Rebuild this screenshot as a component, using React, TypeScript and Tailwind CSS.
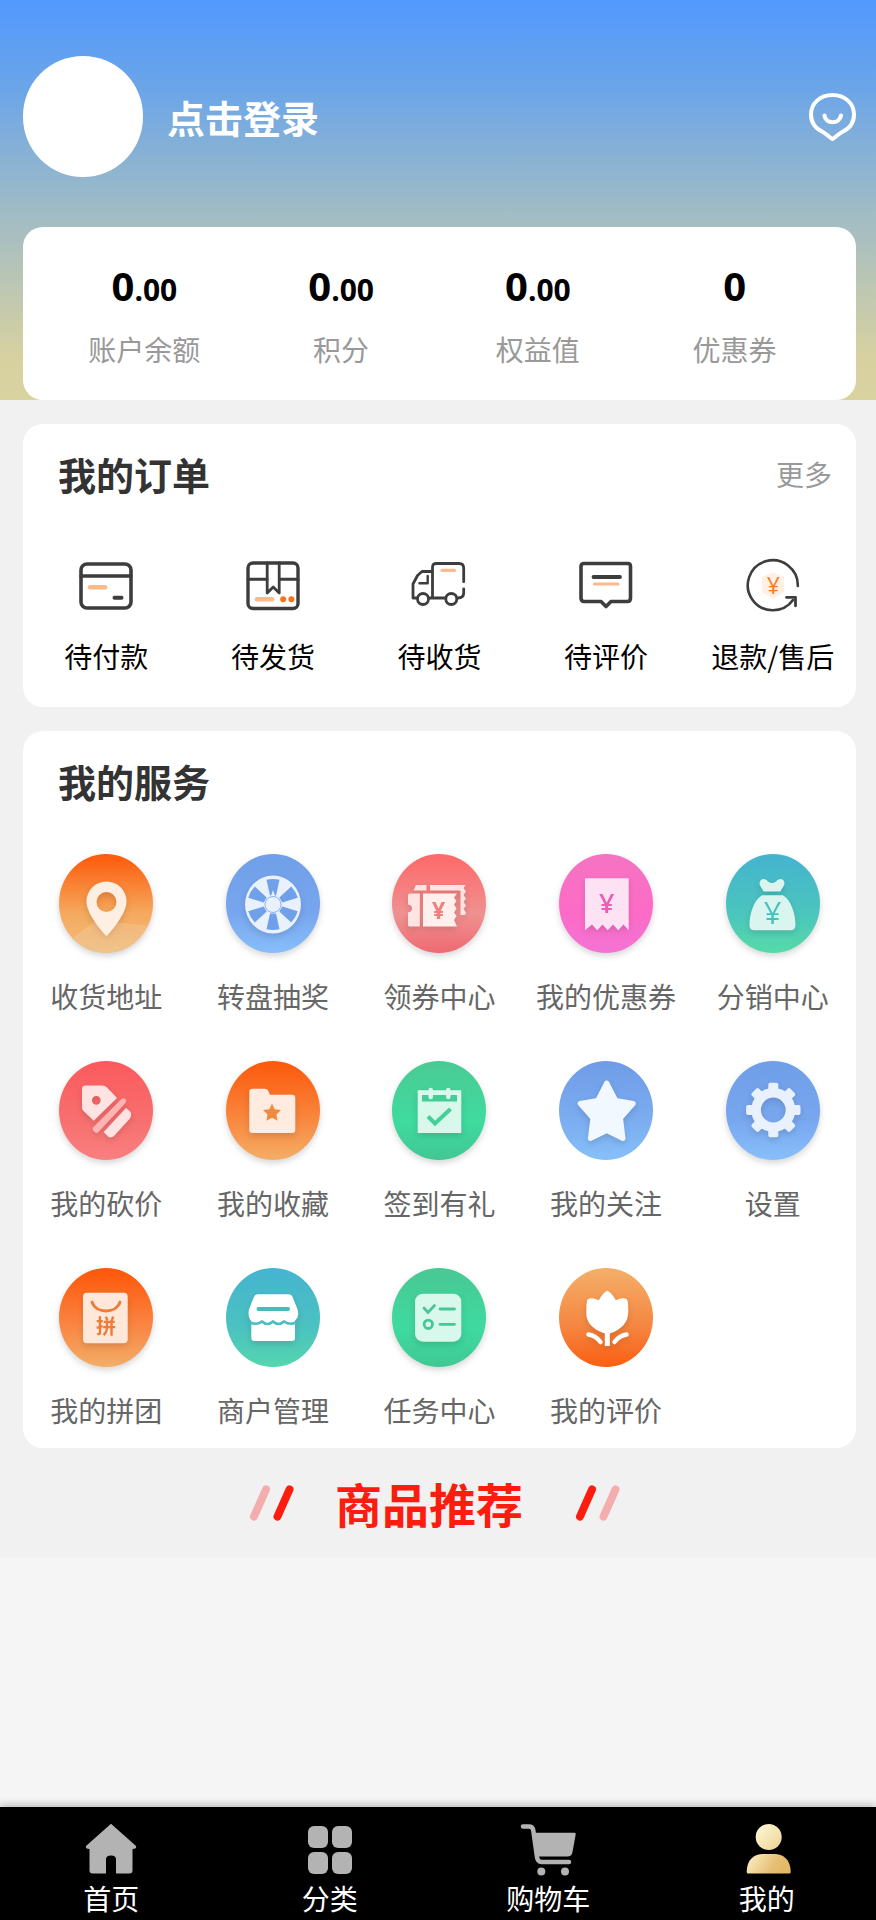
import type { ReactNode } from 'react';

const stats = [
  { label: '账户余额', whole: '0', cents: '.00' },
  { label: '积分', whole: '0', cents: '.00' },
  { label: '权益值', whole: '0', cents: '.00' },
  { label: '优惠券', whole: '0', cents: '' },
];

const orders = [
  {
    label: '待付款',
    icon: (
      <>
        <rect x="3" y="6" width="50" height="44" rx="6" strokeWidth="3.6" />
        <path d="M3 18h50" strokeWidth="3.4" />
        <path d="M12 29.3h15" stroke="#fbb98c" strokeWidth="4.4" />
        <path d="M36.5 39.7h7" strokeWidth="4" />
      </>
    ),
  },
  {
    label: '待发货',
    icon: (
      <>
        <rect x="3" y="5" width="50" height="45.5" rx="5" strokeWidth="3.4" />
        <path d="M3 21.3h19M34.5 21.3H53" strokeWidth="3" />
        <path d="M22.2 5v30l6-6 6 6V5" strokeWidth="2.8" />
        <path d="M12 41.3h15" stroke="#fbb98c" strokeWidth="4.6" />
        <circle cx="38.2" cy="41.2" r="3" fill="#f97316" stroke="none" />
        <circle cx="46.4" cy="41.2" r="3" fill="#f97316" stroke="none" />
      </>
    ),
  },
  {
    label: '待收货',
    icon: (
      <>
        <path d="M5.5 40H2V26l4.5-8.5 4.5-4h10.500M18.500 40H34M21.500 39V9.500q0-4 4-4H48q4.700 0 4.700 4.700v13.500M52.700 31v4q0 5-6 5" strokeWidth="2.800" />
        <path d="M16.700 18v7.300H8.500" strokeWidth="2.400" />
        <circle cx="12" cy="41" r="5.500" strokeWidth="2.800" />
        <circle cx="40.300" cy="41" r="5.500" strokeWidth="2.800" />
        <path d="M31 12.300h12.500" stroke="#fbb98c" strokeWidth="3.200" />
      </>
    ),
  },
  {
    label: '待评价',
    icon: (
      <>
        <path d="M6 5.500h44q2.500 0 2.500 3V40q0 3.500-3 3.500H33L28 48.500l-5-5H6q-3 0-3-3.500V8.500q0-3 3-3z" strokeWidth="3.600" />
        <path d="M15.500 19h26.500" strokeWidth="3.800" />
        <path d="M16.500 26h23.500" stroke="#fbb98c" strokeWidth="3.200" />
      </>
    ),
  },
  {
    label: '退款/售后',
    icon: (
      <>
        <path d="M28 14.500l11 4.500v15l-11 7-11-7V19z" fill="#fff0e5" stroke="none" />
        <path d="M52.800 28A25 25 0 1 0 48 42" strokeWidth="2.600" />
        <path d="M41.500 39.300h9v8.500" strokeWidth="2.800" />
        <text x="28.300" y="36" textAnchor="middle" fontSize="23" fontWeight="500" fill="#f97a26" stroke="none" fontFamily="Open Sans, sans-serif">¥</text>
      </>
    ),
  },
];

type Service = {
  label: string;
  id: string;
  colors: string[];
  flat?: boolean;
  icon: ReactNode;
};

const services: Service[] = [
  {
    label: '收货地址',
    id: 'address',
    colors: ['#fd5f10', '#f4a95e', '#f3bd7c'],
    icon: (
      <>
        <path d="M14.500 84Q25 74 38 67l51 4.500Q85 82 72 91 47 106 22 91z" fill="#fff" opacity=".14" />
        <path d="M47.500 82C44 79 27.500 60 27.500 47.500a20 20 0 0 1 40 0C67.500 60 51 79 47.500 82zM47.500 38a10 10 0 1 0 0 20 10 10 0 0 0 0-20z" fillRule="evenodd" fill="#ffefe2" />
      </>
    ),
  },
  {
    label: '转盘抽奖',
    id: 'wheel',
    colors: ['#70a0e9', '#78a6ee', '#86befa'],
    icon: (
      <>
        <ellipse cx="47" cy="50.500" rx="28" ry="29" fill="#e9f1fd" />
        {[0, 60, 120, 180, 240, 300].map((deg) => (
          <path key={deg} d="M40.500 25.700q6.500-1.600 13 0L50 41.500h-6z" fill="#70a0e9" transform={`rotate(${deg} 47 50.500)`} />
        ))}
        <path d="M47 36l2 6h-4z" fill="#e9f1fd" />
        <circle cx="47" cy="50.500" r="8" fill="#e9f1fd" stroke="#88b1f0" strokeWidth="1" />
      </>
    ),
  },
  {
    label: '领券中心',
    id: 'coupons',
    colors: ['#fc6c6c', '#ef9190', '#ef6a72'],
    icon: (
      <>
        <path d="M24 31h10.500v5.500H21.500zM38 31h35.500l-2 3 2.500 3.500-2.500 3.500 2.500 3.500-2.500 3.500 2.500 3.500-2.500 3.500 2.500 3.500-1 2.500h-4.500V36.500H38z" fill="#ffe4e2" />
        <path d="M17.500 39.500H27.800v33H17.500q-1.500 0-1.500-1.500V58.500q4-.500 4-4t-4-4V41q0-1.500 1.500-1.500z" fill="#ffe4e2" />
        <path d="M31 39.500h34l-3 4 2.500 3.500-2.500 3.500 2.500 4-2.500 4 2.500 3.500-2.500 4 3 6.500H31z" fill="#ffefed" />
        <text x="46.500" y="64.500" textAnchor="middle" fontSize="23" fontWeight="700" fill="#ee8080" fontFamily="Open Sans, sans-serif">¥</text>
      </>
    ),
  },
  {
    label: '我的优惠券',
    id: 'mycoupon',
    colors: ['#f573c2', '#fd6bc7', '#f373d5'],
    icon: (
      <>
        <path d="M26 24.300h43.700v52L64.500 70.500l-5.300 5.800-5.200-5.800-5.300 5.800-5.200-5.800-5.300 5.800-5.200-5.800L26 76.300z" fill="#fde2f4" />
        <text x="47.700" y="58.500" textAnchor="middle" fontSize="27" fontWeight="600" fill="#ea5eb6" fontFamily="Open Sans, sans-serif">¥</text>
      </>
    ),
  },
  {
    label: '分销中心',
    id: 'bag',
    colors: ['#45b5cd', '#4bc5bd', '#56dba6'],
    icon: (
      <>
        <path d="M37.500 37.500C35 32 32.500 31 34 27.500c2-4 6-2.500 8 0q4 3 8 0c2-2.500 6.500-4 8 0 1.500 3.500-1 4.500-3.500 10z" fill="#daf4f0" />
        <path d="M36 41.300h21c8 5 12.500 18 12.500 30q0 5-5 5H28.500q-5 0-5-5c0-12 4.500-25 12.500-30z" fill="#daf4f0" />
        <text x="46.500" y="70" textAnchor="middle" fontSize="31" fontWeight="500" fill="#4ac0bb" fontFamily="Open Sans, sans-serif">¥</text>
      </>
    ),
  },
  {
    label: '我的砍价',
    id: 'bargain',
    colors: ['#fb5b5e', '#f7706f', '#f97f80'],
    icon: (
      <>
        <path d="M26.500 24.500H43q3 0 5 2L58 37 34.700 59.700 24.500 50q-1.500-1.500-1.500-3.500V28q0-3.500 3.500-3.500zM37.300 35a4.300 4.300 0 1 0 0 8.700 4.300 4.300 0 0 0 0-8.700z" fillRule="evenodd" fill="#ffe3e2" />
        <path d="M62.500 38q2.500-1.500 4 0t0 4L39 71.500q-2 1-4-1t-1-4z" fill="#fdb4b2" />
        <path d="M67 47l4 3.500q2.500 3.500-.5 7.500L55 75q-3 2.500-6 .5L44.700 71z" fill="#ffe3e2" />
      </>
    ),
  },
  {
    label: '我的收藏',
    id: 'favorite',
    colors: ['#fc5c0e', '#f98840', '#f4ae66'],
    icon: (
      <>
        <path d="M26.500 27.700H39q2.500 0 3.500 2.500l1.500 3.500h22q3.300 0 3.300 3.300v32q0 3-3 3H26.300q-3 0-3-3V30.700q0-3 3.200-3z" fill="#ffebdf" />
        <path d="M46 42.500l2.700 5.800 6.300.8-4.600 4.400 1.200 6.300-5.600-3-5.600 3 1.200-6.300-4.600-4.400 6.300-.8z" fill="#ef8a43" />
      </>
    ),
  },
  {
    label: '签到有礼',
    id: 'checkin',
    colors: ['#4acb95', '#3fdb9f', '#42c794'],
    icon: (
      <>
        <path d="M25.700 29.300h43.600V72H25.700z" fill="#d8f8eb" />
        <path d="M30 34h35v6.500H30z" fill="#43ce97" />
        <path d="M38.700 29v7M56.300 29v7" stroke="#d8f8eb" strokeWidth="4.500" strokeLinecap="round" />
        <path d="M36 55.500l7 7 15.500-14.500" fill="none" stroke="#45cf99" strokeWidth="4" />
      </>
    ),
  },
  {
    label: '我的关注',
    id: 'follow',
    colors: ['#709de8', '#7badf0', '#86c0f9'],
    flat: true,
    icon: (
      <path
        d="M47.700 22l9 17.500 17.500 3-12.700 14.500 2.500 20.500-16.300-8-16.300 8 2.500-20.500L21.200 42.500l17.500-3z"
        fill="#f2f8ff"
        stroke="#f2f8ff"
        strokeWidth="5"
        strokeLinejoin="round"
      />
    ),
  },
  {
    label: '设置',
    id: 'settings',
    colors: ['#709fe9', '#78a7ef', '#88bffa'],
    icon: (
      <>
        <circle cx="47.300" cy="49" r="17.200" fill="none" stroke="#e8f1fd" strokeWidth="9.600" />
        {[0, 45, 90, 135, 180, 225, 270, 315].map((deg) => (
          <rect key={deg} x="42.300" y="21.800" width="10" height="9" rx="2" fill="#e8f1fd" transform={`rotate(${deg} 47.300 49)`} />
        ))}
      </>
    ),
  },
  {
    label: '我的拼团',
    id: 'group',
    colors: ['#fd5a0d', '#f98744', '#f2ae68'],
    icon: (
      <>
        <rect x="24" y="24.700" width="44.700" height="50.600" rx="4" fill="#ffe8d9" />
        <path d="M33 34c4 12 24 12 28 0" fill="none" stroke="#ef7b3a" strokeWidth="2.800" strokeLinecap="round" />
        <text x="47" y="66" textAnchor="middle" fontSize="20" fontWeight="700" fill="#ef7b3a" fontFamily="Noto Sans CJK SC, sans-serif">拼</text>
      </>
    ),
  },
  {
    label: '商户管理',
    id: 'shop',
    colors: ['#46b5cf', '#4bc2c0', '#55d6ae'],
    flat: true,
    icon: (
      <>
        <path d="M25.300 50H69v20q0 3-3 3H28.300q-3 0-3-3z" fill="#fff" />
        <path d="M31.500 26.300h31.500q2.500 0 3.500 2.500l5 12.500q2 7-2 11-6 4.500-11.500 0-5.500 5-11 0-5.500 5-11 0-5.500 4.500-11.500 0-3-4-1.500-11l5-12.500q1-2.500 3.500-2.500z" fill="#fff" />
        <path d="M24 54.500q6.500 3 12-1 5.500 5 11 0 5.500 5 11 0 6 4 12 1" fill="none" stroke="#4bbfc2" strokeWidth="2.600" />
        <path d="M32.500 41h29.500" stroke="#4bb9b9" strokeWidth="4" strokeLinecap="round" />
      </>
    ),
  },
  {
    label: '任务中心',
    id: 'tasks',
    colors: ['#48c995', '#3eda9f', '#40c995'],
    icon: (
      <>
        <rect x="23" y="25.700" width="46.300" height="48" rx="8" fill="#d8f8eb" />
        <g fill="none" stroke="#4bc598" strokeWidth="2.800" strokeLinecap="round">
          <path d="M32 40l4 4.500 6.500-7M48 41h14.500M48 56.300h14.500" />
          <circle cx="36.300" cy="56.300" r="4.200" />
        </g>
      </>
    ),
  },
  {
    label: '我的评价',
    id: 'review',
    colors: ['#f4ac66', '#f58540', '#fb5e11'],
    flat: true,
    icon: (
      <>
        <path d="M48.300 22.700q4.500 2 8.500 9.500 7-3.500 11-1 1.500 1 1.500 12 0 16-18.500 22.300V78h-5V65.500C28 59 27.300 50 27.300 43.200q0-11 1.500-12 4-2.500 11 1 4-7.500 8.500-9.500z" fill="#fff" />
        <path d="M29.500 66.500q7 1 12 7.500M67.500 66.500q-7 1-12 7.500" fill="none" stroke="#fff" strokeWidth="4.500" strokeLinecap="round" />
      </>
    ),
  },
];

const tabs = [
  {
    label: '首页',
    icon: (
      <path d="M26 .8 51 23q1 3-3.500 3V47.500q0 3-3 3H31V36q0-3.500-5-3.500T21 36v14.500H7.500q-3 0-3-3V26Q0 26 1 23z" fill="#b3b3b3" />
    ),
  },
  {
    label: '分类',
    icon: (
      <g fill="#b3b3b3">
        <rect x="4" y="3" width="20" height="22" rx="6" />
        <rect x="28" y="3" width="20" height="22" rx="6" />
        <rect x="4" y="29" width="20" height="22" rx="6" />
        <rect x="28" y="29" width="20" height="22" rx="6" />
      </g>
    ),
  },
  {
    label: '购物车',
    icon: (
      <>
        <path d="M1 3.500h6q3.500 0 4.200 3.500L15 34q.6 5 4.500 5H47" fill="none" stroke="#b3b3b3" strokeWidth="4.500" strokeLinecap="round" />
        <path d="M11.500 9.700h41q1.500 0 1.200 1.500L50.500 29q-.8 4.500-5 4.500H15z" fill="#b3b3b3" />
        <circle cx="19.300" cy="48.500" r="4" fill="#b3b3b3" />
        <circle cx="43" cy="48.500" r="4" fill="#b3b3b3" />
      </>
    ),
  },
  {
    label: '我的',
    icon: (
      <>
        <defs>
          <linearGradient id="gold-head" x1="0" y1="0" x2="1" y2="1">
            <stop offset="0" stopColor="#fff9db" />
            <stop offset="1" stopColor="#edd392" />
          </linearGradient>
          <linearGradient id="gold-body" x1="0" y1="0" x2="1" y2=".3">
            <stop offset="0" stopColor="#fdf3c9" />
            <stop offset=".7" stopColor="#e7c078" />
            <stop offset="1" stopColor="#e3b866" />
          </linearGradient>
        </defs>
        <circle cx="27.700" cy="14" r="13" fill="url(#gold-head)" />
        <path d="M5.700 49c0-13 8-18 16-18h12c8 0 16 5 16 18q0 1.500-1.500 1.500h-41q-1.500 0-1.500-1.500z" fill="url(#gold-body)" />
      </>
    ),
  },
];

function ServiceIcon({ service }: { service: Service }) {
  const [top, middle, bottom] = service.colors;
  return (
    <svg
      viewBox="0 0 94 99"
      className={`h-[99px] w-[94px] overflow-visible ${service.flat ? '' : 'drop-shadow-[0_3px_3px_rgba(0,0,0,0.16)]'}`}
      aria-hidden="true"
    >
      <defs>
        <linearGradient id={service.id} x1="0" y1="0" x2="0" y2="1">
          <stop offset="0.05" stopColor={top} />
          <stop offset="0.6" stopColor={middle} />
          <stop offset="1" stopColor={bottom} />
        </linearGradient>
      </defs>
      <ellipse cx="47" cy="49.500" rx="47" ry="49.500" fill={`url(#${service.id})`} />
      <g className="drop-shadow-[0_3px_3px_rgba(0,0,0,0.12)]">{service.icon}</g>
    </svg>
  );
}

function Slashes({ flip = false }: { flip?: boolean }) {
  return (
    <svg viewBox="0 0 46 36" className="h-9 w-[46px]" fill="none" strokeWidth="8" strokeLinecap="round" aria-hidden="true">
      <path d="M5 31.500 17 4.500" stroke={flip ? '#fc1c10' : '#f4adac'} />
      <path d="M28.500 31.500l12-27" stroke={flip ? '#f4adac' : '#fc1c10'} />
    </svg>
  );
}

export default function App() {
  return (
    <div className="flex min-h-screen flex-col bg-[#f5f5f5] font-['Noto_Sans_CJK_SC',sans-serif] text-[28px] leading-10">
      <main className="bg-[#f1f1f1]">
        <header className="bg-[linear-gradient(180deg,#5299ff_0%,#6ba5e8_22%,#9bbac8_50%,#d7d1a1_89%,#d9d3a0_100%)] pt-14 pr-5 pl-[23px]">
          <div className="flex items-center">
            <div className="h-[121px] w-[120px] rounded-full bg-white" />
            <button type="button" className="ml-6 text-[38px] leading-[50px] font-bold text-white">
              点击登录
            </button>
            <button type="button" aria-label="消息" className="ml-auto">
              <svg viewBox="0 0 47 48" className="h-12 w-[47px]" fill="none" stroke="#fff" strokeLinecap="round" strokeLinejoin="round">
                <path d="M23.500 2C11 2 2 10.500 2 21.500c0 8 4.500 14 11.500 17.200 4 2 6.500 5.300 10 7.300 3.500-2 6-5.300 10-7.300C40.500 35.500 45 29.500 45 21.500 45 10.500 36 2 23.500 2z" strokeWidth="4" />
                <path d="M15.500 22.500c1 9 15 9 16.500 0" strokeWidth="4.200" />
              </svg>
            </button>
          </div>

          <div className="mt-[50px] grid grid-cols-4 rounded-[20px] bg-white px-[23px] pt-[34px] pb-[31px] text-center">
            {stats.map((stat) => (
              <a key={stat.label} href="#" className="block">
                <p className="font-['Open_Sans',sans-serif] text-[40px] leading-[50px] font-bold text-black">
                  {stat.whole}
                  {stat.cents && <span className="text-[30px] leading-none">{stat.cents}</span>}
                </p>
                <p className="mt-[18px] text-[#999]">{stat.label}</p>
              </a>
            ))}
          </div>
        </header>

        <div className="pr-5 pl-[23px]">
          <section className="mt-6 rounded-[20px] bg-white pt-[25px] pb-[31px]">
            <div className="flex items-center justify-between pr-6 pl-[35px]">
              <h2 className="text-[38px] leading-[50px] font-bold text-[#333]">我的订单</h2>
              <a href="#" className="text-[#999]">更多</a>
            </div>
            <div className="mt-[59px] grid grid-cols-5">
              {orders.map((order) => (
                <a key={order.label} href="#" className="flex flex-col items-center whitespace-nowrap text-black">
                  <svg viewBox="0 0 56 56" className="size-14" fill="none" stroke="#3d3d3d" strokeLinecap="round" strokeLinejoin="round" aria-hidden="true">
                    {order.icon}
                  </svg>
                  <span className="mt-[22px]">{order.label}</span>
                </a>
              ))}
            </div>
          </section>

          <section className="mt-6 rounded-[20px] bg-white pt-[25px] pb-[18px]">
            <h2 className="pl-[35px] text-[38px] leading-[50px] font-bold text-[#333]">我的服务</h2>
            <div className="mt-12 grid grid-cols-5 gap-y-[45px]">
              {services.map((service) => (
                <a key={service.id} href="#" className="flex flex-col items-center whitespace-nowrap text-[#666]">
                  <ServiceIcon service={service} />
                  <span className="mt-[23px]">{service.label}</span>
                </a>
              ))}
            </div>
          </section>
        </div>

        <div className="flex items-center justify-center gap-10 pt-[25px] pr-1.5 pb-6">
          <Slashes />
          <h2 className="pr-3 text-[47px] leading-[60px] font-bold text-[#fc1c10]">商品推荐</h2>
          <Slashes flip />
        </div>
      </main>

      <nav className="sticky bottom-0 mt-auto grid grid-cols-4 bg-black pt-4 pb-0.5 pl-0.5 text-white shadow-[0_-2px_8px_rgba(0,0,0,0.25)]">
        {tabs.map((tab) => (
          <a key={tab.label} href="#" className="flex flex-col items-center">
            <svg viewBox="0 0 52 52" className="size-13 overflow-visible" aria-hidden="true">
              {tab.icon}
            </svg>
            <span className="mt-[3px]">{tab.label}</span>
          </a>
        ))}
      </nav>
    </div>
  );
}
